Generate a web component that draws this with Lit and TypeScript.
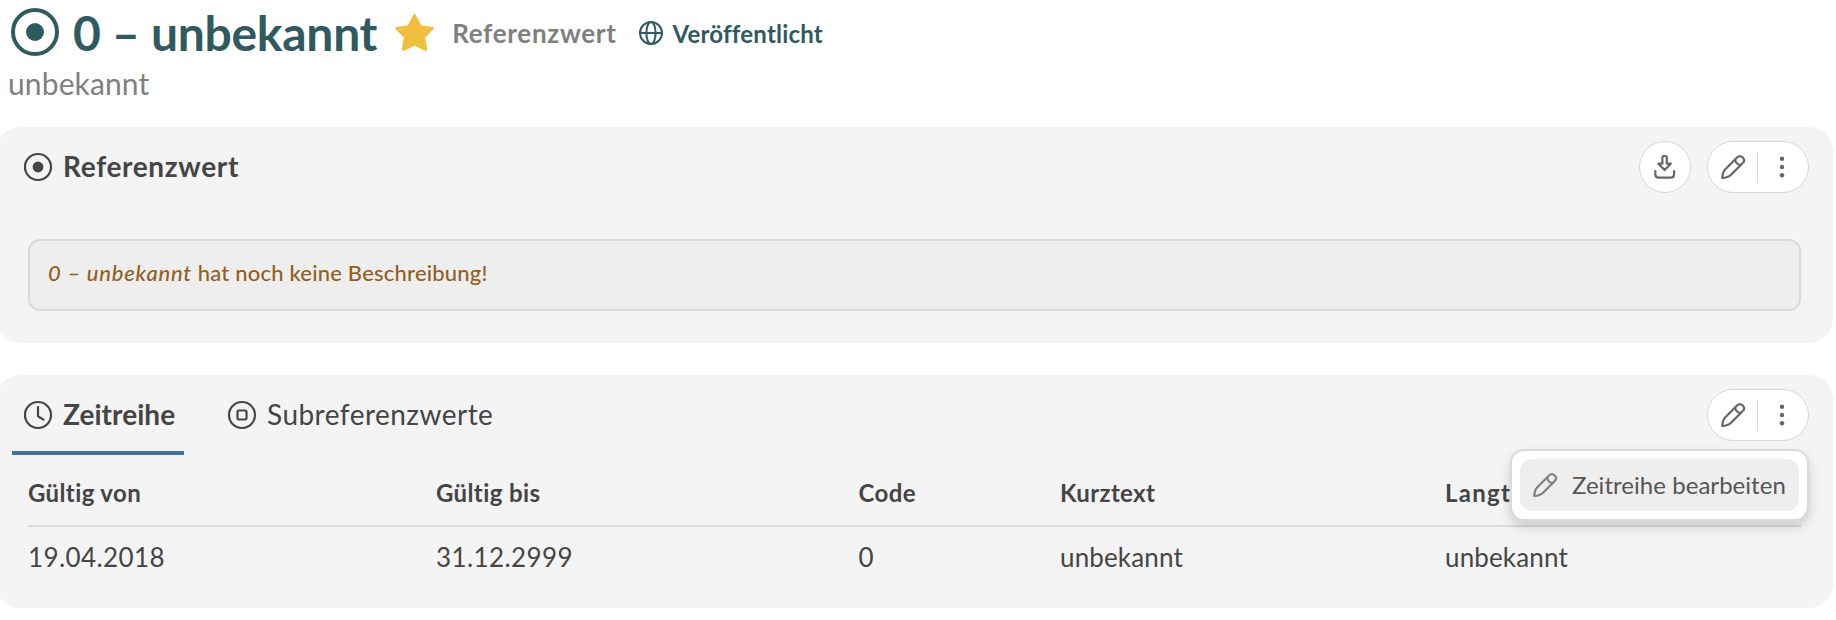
import { LitElement, html, css, svg } from "lit";
import { customElement, property } from "lit/decorators.js";

const ICONS: Record<string, unknown> = {
  value: svg`<circle cx="14" cy="14" r="13"/><circle cx="14" cy="14" r="5.4" fill="currentColor" stroke="none"/>`,
  valueLarge: svg`<circle cx="24" cy="24" r="22"/><circle cx="24" cy="24" r="9" fill="currentColor" stroke="none"/>`,
  clock: svg`<circle cx="14" cy="14" r="13"/><path d="M14 6.2v8.2q0 .8.7 1.3l4.8 2.9"/>`,
  subvalue: svg`<circle cx="14" cy="14" r="13"/><rect x="9.5" y="9.5" width="9" height="9" rx="1.3"/>`,
  globe: svg`<circle cx="12" cy="12" r="11"/><ellipse cx="12" cy="12" rx="4.6" ry="11"/><path d="M1 12h22"/>`,
  star: svg`<path fill="currentColor" stroke="none" d="M18.2 1Q19.5-.8 20.8 1L26.2 11.2 37.4 13Q39.6 13.6 38.2 15.2L30.3 23.6 32.1 35.2Q32 37.5 29.8 36.8L19.5 31.8 9.2 36.8Q7 37.5 6.9 35.2L8.7 23.6.8 15.2Q-.6 13.6 1.6 13L12.8 11.2Z"/>`,
  download: svg`<path d="M9.4 8.7V2.4Q9.4 1 10.8 1h1.6Q13.8 1 13.8 2.4V8.7h4L11.6 15 5.4 8.7Z"/><path d="M2.3 16v3.2q0 3.500 3.500 3.500h11.800q3.500 0 3.500-3.500V16"/>`,
  pencil: svg`<path d="M1.3 23c.1-3.6.8-6.6 3-8.8L16.3 2.3C19.8-1 25.3 4.4 22 7.8L10 19.8C7.8 22 4.9 22.9 1.3 23Z"/><path d="M14.2 4.6c.2 2.9 2.500 5.200 5.500 5.500"/>`,
  dots: svg`<g fill="currentColor" stroke="none"><circle cx="12" cy="3.7" r="2.2"/><circle cx="12" cy="12" r="2.2"/><circle cx="12" cy="20.2" r="2.2"/></g>`,
};

@customElement("ui-icon")
class UiIcon extends LitElement {
  @property() name = "value";
  @property({ type: Number }) width = 24;
  @property({ type: Number }) height = 24;
  @property({ type: Number }) stroke = 2;
  static styles = css`
    :host { display: inline-flex; flex: none; }
    svg { display: block; overflow: visible; fill: none; stroke: currentColor; stroke-linecap: round; stroke-linejoin: round; }
  `;
  render() {
    return html`<svg width=${this.width} height=${this.height} viewBox="0 0 ${this.width} ${this.height}" stroke-width=${this.stroke}>${ICONS[this.name]}</svg>`;
  }
}

@customElement("action-pill")
class ActionPill extends LitElement {
  static styles = css`
    :host {
      display: flex; align-items: center; box-sizing: border-box; width: 102px; height: 52px;
      padding: 0 14px 0 13px; border: 1px solid #d8d8d8; border-radius: 26px; background: #fff; color: #666;
    }
    .divider { width: 2px; height: 31px; margin: 0 13px 0 11.500px; background: #dadada; }
  `;
  render() {
    return html`<ui-icon name="pencil" stroke="2.2"></ui-icon><span class="divider"></span><ui-icon name="dots"></ui-icon>`;
  }
}

@customElement("app-root")
class AppRoot extends LitElement {
  static styles = css`
    :host {
      display: block; height: 620px; overflow: hidden; background: #fff; color: #454545;
      font-family: Lato, "Open Sans", sans-serif; font-variant-ligatures: none;
    }
    .title-row { display: flex; align-items: center; height: 64px; padding-left: 10.5px; color: #2f5a60; }
    h1 { margin: 1px 0 0 14.5px; font-size: 48px; line-height: 60px; font-weight: 700; letter-spacing: -0.27px; white-space: nowrap; }
    .star { margin: 0 0 0 18px; color: #f0c03c; }
    .type { margin: 1px 0 0 18px; font-size: 26px; font-weight: 700; letter-spacing: 0.69px; color: #7f7f7f; }
    .globe { margin: 2px 0 0 22px; }
    .status { margin: 3px 0 0 10px; font-size: 24px; font-weight: 700; letter-spacing: 0.2px; }
    .subtitle { padding: 1px 0 0 8px; margin-bottom: -1px; font-size: 30px; line-height: 36px; letter-spacing: 0.12px; color: #808080; }
    .card { box-sizing: border-box; width: 1837px; margin: 27px 0 0 -4px; padding: 0 24px 0 32px; border-radius: 24px; background: #f4f4f4; }
    .card + .card { margin-top: 32px; }
    .head { position: relative; display: flex; align-items: center; height: 80px; margin: 0 0 0 -16px; }
    .heading { display: flex; align-items: center; gap: 11.5px; padding-left: 11.5px; font-size: 28px; line-height: 34px; }
    .heading .label { margin-bottom: 3px; }
    .strong { font-weight: 700; letter-spacing: 0.66px; }
    .actions { display: flex; gap: 16px; margin-left: auto; }
    .round { display: flex; align-items: center; justify-content: center; box-sizing: border-box; width: 52px; height: 52px; border: 1px solid #d8d8d8; border-radius: 50%; background: #fff; color: #666; }
    .note {
      box-sizing: border-box; height: 72px; margin: 32px 8px 0 0; padding: 19px 18px 0; border: 2px solid #dadada; border-radius: 12px;
      background: #eee; color: #925f20; font-size: 22px; line-height: 26px; font-weight: 500; letter-spacing: 0.2px;
    }
    .note em { letter-spacing: 0.78px; }
    .overview { height: 216px; }
    .series { height: 233px; }
    .tab { box-sizing: border-box; height: 80px; }
    .tab .label { margin-bottom: 1px; }
    .active { width: 172px; border-bottom: 4px solid #3f71a3; font-weight: 700; letter-spacing: 0.06px; padding-top: 3px; }
    .second { margin-left: 32px; letter-spacing: 0.47px; padding-bottom: 1px; }
    .menu {
      position: absolute; top: 74px; right: 0; z-index: 2; box-sizing: border-box; width: 299px; height: 72px; padding: 8px;
      border: 2px solid #dadada; border-radius: 14px; background: #fff; box-shadow: 0 6px 12px rgba(0, 0, 0, 0.16);
    }
    .item { display: flex; align-items: center; height: 52px; padding-left: 13px; border-radius: 12px; background: #eee; color: #808080; }
    .item span { margin: 0 0 2px 15px; font-size: 24px; letter-spacing: 0.04px; color: #555; white-space: nowrap; }
    .table { margin-right: 8px; }
    .row { display: grid; grid-template-columns: 408px 422.5px 201.5px 385px 1fr; }
    .th { height: 70px; border-bottom: 2px solid #dadada; font-size: 24px; line-height: 75px; font-weight: 700; letter-spacing: 0.38px; }
    .th .wide { letter-spacing: 1.3px; }
    .td { font-size: 26px; line-height: 60px; letter-spacing: 0.14px; }
    .date { letter-spacing: 0.42px; }
  `;
  render() {
    return html`
      <header>
        <div class="title-row">
          <ui-icon name="valueLarge" width="48" height="48" stroke="4"></ui-icon>
          <h1>0 – unbekannt</h1>
          <ui-icon class="star" name="star" width="39" height="37"></ui-icon>
          <span class="type">Referenzwert</span>
          <ui-icon class="globe" name="globe"></ui-icon>
          <span class="status">Veröffentlicht</span>
        </div>
        <div class="subtitle">unbekannt</div>
      </header>
      <section class="card overview">
        <div class="head">
          <div class="heading strong"><ui-icon name="value" width="28" height="28" stroke="2.2"></ui-icon><span class="label">Referenzwert</span></div>
          <div class="actions">
            <div class="round"><ui-icon name="download" stroke="2.2"></ui-icon></div>
            <action-pill></action-pill>
          </div>
        </div>
        <div class="note"><em>0 – unbekannt</em> hat noch keine Beschreibung!</div>
      </section>
      <section class="card series">
        <div class="head">
          <div class="heading tab active"><ui-icon name="clock" width="28" height="28" stroke="2.2"></ui-icon><span class="label">Zeitreihe</span></div>
          <div class="heading tab second"><ui-icon name="subvalue" width="28" height="28" stroke="2.2"></ui-icon><span class="label">Subreferenzwerte</span></div>
          <div class="actions"><action-pill></action-pill></div>
          <div class="menu"><div class="item"><ui-icon name="pencil" stroke="2.2"></ui-icon><span>Zeitreihe bearbeiten</span></div></div>
        </div>
        <div class="table">
          <div class="row th"><span>Gültig von</span><span>Gültig bis</span><span>Code</span><span>Kurztext</span><span class="wide">Langtext</span></div>
          <div class="row td"><span class="date">19.04.2018</span><span class="date">31.12.2999</span><span>0</span><span>unbekannt</span><span>unbekannt</span></div>
        </div>
      </section>
    `;
  }
}
